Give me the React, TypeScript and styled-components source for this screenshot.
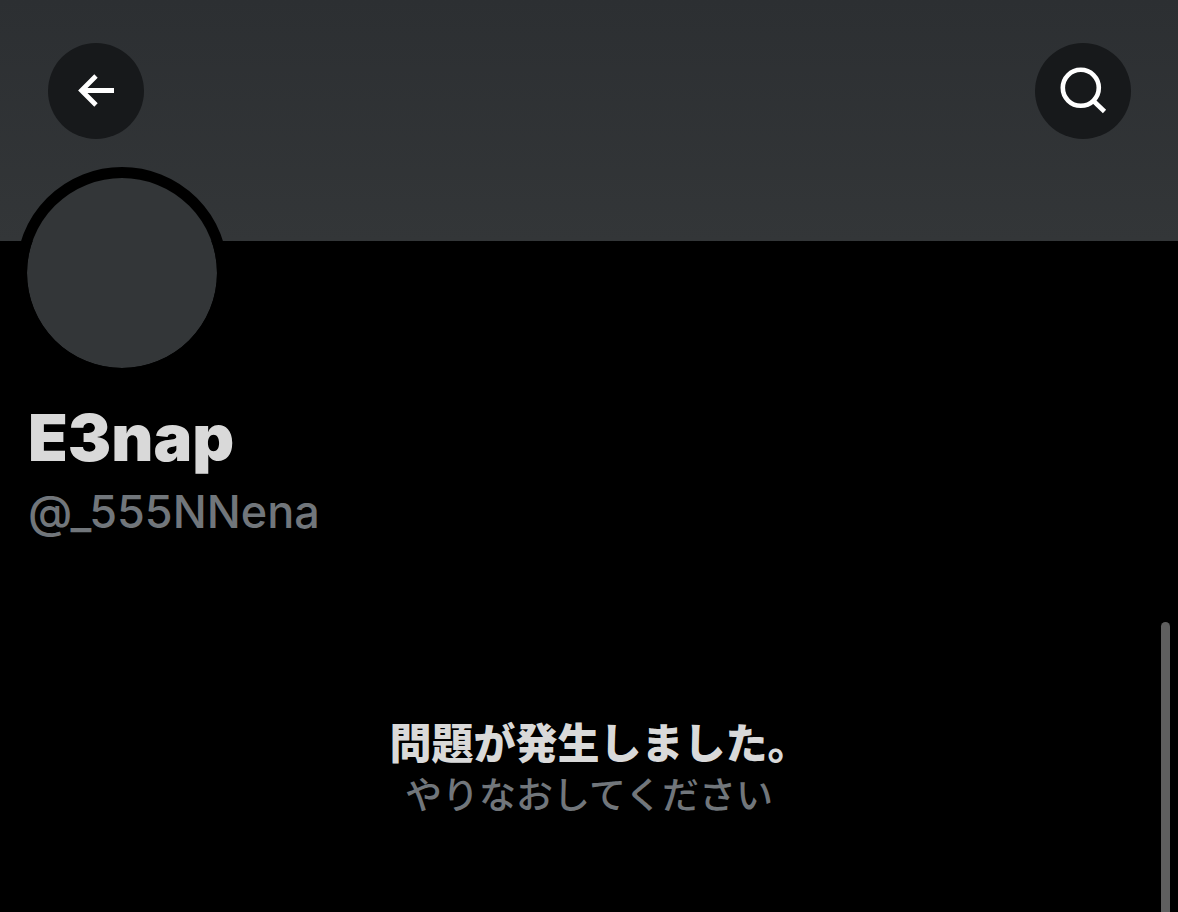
import React from "react";
import styled, { createGlobalStyle } from "styled-components";

const GlobalStyle = createGlobalStyle`
  *, *::before, *::after { box-sizing: border-box; }
  html { background: #000; }
  body { margin: 0; }
`;

const Page = styled.main`
  position: relative;
  display: flex;
  flex-direction: column;
  min-height: 100vh;
  overflow: hidden;
  background: #000;
  font-family: Inter, "Noto Sans CJK JP", sans-serif;
`;

const Banner = styled.header`
  display: flex;
  justify-content: space-between;
  align-items: flex-start;
  height: 241px;
  padding: 43px 47px 0 48px;
  background: linear-gradient(#2c2f32, #333638);
`;

const RoundButton = styled.button`
  display: grid;
  place-items: center;
  width: 96px;
  height: 96px;
  padding: 0;
  border: 0;
  border-radius: 50%;
  background: #17191b;
  color: #fff;
  cursor: pointer;
`;

const Icon = styled.svg`
  display: block;
  width: 60px;
  height: 60px;
  fill: none;
  stroke: currentColor;
`;

const Profile = styled.section`
  display: flex;
  flex-direction: column;
  align-items: flex-start;
  margin-top: -74px;
  padding: 0 16px;
`;

const Avatar = styled.div`
  width: 212px;
  height: 212px;
  border: 11px solid #000;
  border-radius: 50%;
  background: #333638;
  background-clip: padding-box;
`;

const Name = styled.h1`
  margin: 20px 0 0 12px;
  font-size: 65px;
  line-height: 78px;
  font-weight: 900;
  color: #d9d9d9;
`;

const Handle = styled.p`
  margin: 8px 0 0 12px;
  font-size: 45px;
  line-height: 54px;
  font-weight: 500;
  color: #71767b;
`;

const ErrorMessage = styled.section`
  display: flex;
  flex-direction: column;
  align-items: center;
  margin-top: 177px;
  padding: 0 16px;
  text-align: center;
`;

const ErrorTitle = styled.h2`
  margin: 0;
  font-size: 42px;
  line-height: 56px;
  font-weight: 800;
  font-feature-settings: "halt";
  color: #d9d9d9;
`;

const ErrorHint = styled.p`
  margin: 0;
  font-size: 37px;
  line-height: 48px;
  font-weight: 500;
  color: #71767b;
`;

const ScrollThumb = styled.div`
  position: absolute;
  top: 622px;
  right: 8px;
  bottom: 0;
  width: 9px;
  border-radius: 5px 5px 0 0;
  background: #5f5f5f;
`;

export default function App() {
  return (
    <>
      <GlobalStyle />
      <Page>
        <Banner>
          <RoundButton type="button" aria-label="戻る">
            <Icon viewBox="0 0 60 60" strokeWidth="4.8" aria-hidden="true">
              <path d="M48 29.5H15M30 15L15.5 29.5L30 44" />
            </Icon>
          </RoundButton>
          <RoundButton type="button" aria-label="検索">
            <Icon viewBox="0 0 60 60" strokeWidth="4.6" aria-hidden="true">
              <circle cx="27.8" cy="26.8" r="18" />
              <path d="M40 39.5L51.5 50.5" />
            </Icon>
          </RoundButton>
        </Banner>
        <Profile>
          <Avatar />
          <Name>E3nap</Name>
          <Handle>@_555NNena</Handle>
        </Profile>
        <ErrorMessage role="alert">
          <ErrorTitle>問題が発生しました。</ErrorTitle>
          <ErrorHint>やりなおしてください</ErrorHint>
        </ErrorMessage>
        <ScrollThumb aria-hidden="true" />
      </Page>
    </>
  );
}
